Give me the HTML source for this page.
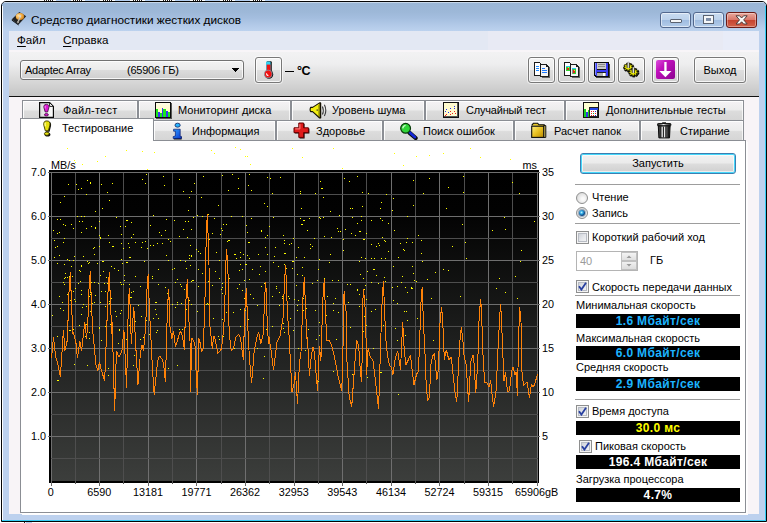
<!DOCTYPE html>
<html><head><meta charset="utf-8"><title>HD Tune</title>
<style>
html,body{margin:0;padding:0;font-family:"Liberation Sans",sans-serif;}
body{width:767px;height:523px;overflow:hidden;background:#fff;position:relative;font-family:"Liberation Sans",sans-serif;font-size:11px;color:#000;}
.abs{position:absolute;}
#win{position:absolute;left:1px;top:1px;width:764px;height:519px;border:1px solid #050505;border-radius:5px 5px 0 0;background:#bdd1ee;overflow:hidden;}
#tgrad{position:absolute;left:0;top:0;width:764px;height:29px;background:linear-gradient(#f4f8fc 0,#9ab6d6 1px,#9db8d8 10px,#a4bedf 16px,#b4cbe9 24px,#bcd2ee 29px);}
#edgeR{position:absolute;left:763px;top:4px;width:1px;height:515px;background:#35cdf5;}
#edgeB{position:absolute;left:0;top:518px;width:764px;height:1px;background:#35cdf5;}
#edgeL{position:absolute;left:0;top:4px;width:1px;height:514px;background:#fdfeff;}
#title{position:absolute;left:31px;top:11px;font-size:11.8px;line-height:18px;white-space:nowrap;}
.cb{position:absolute;top:12px;width:29px;height:14px;border:1px solid #52688e;border-radius:3px;background:linear-gradient(#c9dbf0 0,#bcd2ec 48%,#9fbce0 52%,#b4cdea 100%);box-shadow:inset 0 0 0 1px rgba(255,255,255,.55);}
#bclose{border-color:#6b1b16;background:linear-gradient(#e9a99d 0,#d9776a 48%,#c6432f 52%,#d2634b 100%);box-shadow:inset 0 0 0 1px rgba(255,255,255,.35);}
#menubar{position:absolute;left:9px;top:31px;width:750px;height:19px;background:linear-gradient(90deg,#e3e8f3 0,#e3e8f3 479px,#e8eaf4 479px,#e8eaf4 714px,#e8ecf8 714px);font-size:12px;}
#menubar span{position:absolute;top:2px;line-height:14px;font-size:11.6px;}
#menubar u{text-underline-offset:2px;text-decoration-thickness:1px;}
#toolbar{position:absolute;left:9px;top:50px;width:750px;height:46px;background:linear-gradient(#f8f5f8 0,#f8f5f8 2px,#f2f2f3 2px,#eeeeef 30%,#dbdbdb 62%,#c5c5c5 100%);}
#tbline{position:absolute;left:9px;top:96px;width:750px;height:1px;background:#111;}
#dlg{position:absolute;left:9px;top:97px;width:750px;height:417px;background:#f8f4f7;}
.btn{position:absolute;border:1px solid #787878;border-radius:3px;background:linear-gradient(#f4f4f4 0,#ececec 48%,#dedede 52%,#d2d2d2 100%);box-shadow:inset 0 0 0 1px rgba(255,255,255,.8),0 0 0 1px rgba(255,255,255,.55);box-sizing:border-box;}
#combo{position:absolute;left:20px;top:60px;width:224px;height:20px;box-sizing:border-box;border:1px solid #727272;border-radius:3px;background:linear-gradient(#f3f3f3 0,#ebebeb 48%,#dcdcdc 52%,#cfcfcf 100%);box-shadow:inset 0 0 0 1px rgba(255,255,255,.8);}
#combo span{position:absolute;top:3px;line-height:13px;white-space:nowrap;letter-spacing:-0.25px;}
.tab{position:absolute;box-sizing:border-box;border:1px solid #8b8e94;border-bottom:none;background:linear-gradient(#f5f3f5 0,#ececec 47%,#dcdcdc 53%,#d5d5d5 100%);box-shadow:inset 1px 1px 0 rgba(255,255,255,.9),inset -1px 0 0 rgba(255,255,255,.7);white-space:nowrap;}
.tab span{position:absolute;line-height:13px;margin-left:-1px;}
.tab svg{position:absolute;margin-left:-1px;}
#panel{position:absolute;left:20px;top:140px;width:726px;height:373px;box-sizing:border-box;border:1px solid #8b8e94;background:#fff;box-shadow:1px 1px 0 #fff,2px 2px 0 #fdfcfd;}
#tabact{position:absolute;left:20px;top:118px;width:134px;height:23px;box-sizing:border-box;border:1px solid #8b8e94;border-bottom:none;background:#fff;}
.sep{position:absolute;left:575px;width:165px;height:1px;background:#9d9d9d;}
.lbl{position:absolute;line-height:13px;white-space:nowrap;}
.bb{position:absolute;left:576px;width:164px;height:14px;background:#000;text-align:center;font-weight:bold;font-size:12px;line-height:14px;white-space:nowrap;letter-spacing:0.35px;}
.chk{position:absolute;width:13px;height:13px;box-sizing:border-box;border:1px solid #8e8f8f;background:linear-gradient(135deg,#c4c8d0,#e6e8ec 55%,#f8f8f8);box-shadow:inset 0 0 0 1px #f4f4f4,inset 0 0 0 2px #b8bcc4;}
.chk svg{position:absolute;left:1px;top:1px;}
.rad{position:absolute;width:12px;height:12px;box-sizing:border-box;border:1px solid #8e8f8f;border-radius:50%;background:radial-gradient(circle at 60% 60%,#fafafa 15%,#cfcfcf 100%);}
#chart{position:absolute;left:0;top:0;}

</style></head><body>
<svg id="toprow" class="abs" style="left:0;top:0" width="767" height="1" viewBox="0 0 767 1" shape-rendering="crispEdges"><rect x="44" y="0" width="1" height="1" fill="#222"/><rect x="46" y="0" width="1" height="1" fill="#222"/><rect x="48" y="0" width="1" height="1" fill="#222"/><rect x="50" y="0" width="1" height="1" fill="#222"/><rect x="52" y="0" width="1" height="1" fill="#222"/><rect x="56" y="0" width="15" height="1" fill="#b4cff0"/><rect x="73" y="0" width="1" height="1" fill="#222"/><rect x="75" y="0" width="1" height="1" fill="#222"/><rect x="77" y="0" width="1" height="1" fill="#222"/><rect x="79" y="0" width="1" height="1" fill="#222"/><rect x="81" y="0" width="1" height="1" fill="#222"/><rect x="85" y="0" width="15" height="1" fill="#b4cff0"/><rect x="103" y="0" width="1" height="1" fill="#222"/><rect x="105" y="0" width="1" height="1" fill="#222"/><rect x="107" y="0" width="1" height="1" fill="#222"/><rect x="109" y="0" width="1" height="1" fill="#222"/><rect x="111" y="0" width="1" height="1" fill="#222"/><rect x="115" y="0" width="15" height="1" fill="#b4cff0"/><rect x="133" y="0" width="1" height="1" fill="#222"/><rect x="135" y="0" width="1" height="1" fill="#222"/><rect x="137" y="0" width="1" height="1" fill="#222"/><rect x="139" y="0" width="1" height="1" fill="#222"/><rect x="141" y="0" width="1" height="1" fill="#222"/><rect x="145" y="0" width="15" height="1" fill="#b4cff0"/><rect x="163" y="0" width="1" height="1" fill="#222"/><rect x="165" y="0" width="1" height="1" fill="#222"/><rect x="167" y="0" width="1" height="1" fill="#222"/><rect x="169" y="0" width="1" height="1" fill="#222"/><rect x="171" y="0" width="1" height="1" fill="#222"/><rect x="175" y="0" width="15" height="1" fill="#b4cff0"/><rect x="193" y="0" width="1" height="1" fill="#222"/><rect x="195" y="0" width="1" height="1" fill="#222"/><rect x="197" y="0" width="1" height="1" fill="#222"/><rect x="199" y="0" width="1" height="1" fill="#222"/><rect x="201" y="0" width="1" height="1" fill="#222"/><rect x="205" y="0" width="15" height="1" fill="#b4cff0"/><rect x="223" y="0" width="1" height="1" fill="#222"/><rect x="225" y="0" width="1" height="1" fill="#222"/><rect x="227" y="0" width="1" height="1" fill="#222"/><rect x="229" y="0" width="1" height="1" fill="#222"/><rect x="231" y="0" width="1" height="1" fill="#222"/><rect x="235" y="0" width="15" height="1" fill="#b4cff0"/><rect x="253" y="0" width="1" height="1" fill="#222"/><rect x="255" y="0" width="1" height="1" fill="#222"/><rect x="257" y="0" width="1" height="1" fill="#222"/><rect x="259" y="0" width="1" height="1" fill="#222"/><rect x="261" y="0" width="1" height="1" fill="#222"/><rect x="265" y="0" width="15" height="1" fill="#b4cff0"/></svg>
<svg id="botrow" class="abs" style="left:0;top:522px" width="767" height="1" viewBox="0 0 767 1" shape-rendering="crispEdges"><rect x="24" y="0" width="1" height="1" fill="#222"/><rect x="26" y="0" width="6" height="1" fill="#b4cff0"/></svg>
<div id="win">
 <div id="tgrad"></div>
 <div id="edgeL"></div><div id="edgeR"></div><div id="edgeB"></div>
</div>
<!-- title icon -->
<svg class="abs" style="left:11px;top:9px" width="18" height="18" viewBox="0 0 18 18"><defs><radialGradient id="pl" cx="0.35" cy="0.4" r="0.75"><stop offset="0" stop-color="#ffe0a0"/><stop offset="0.55" stop-color="#f2aa40"/><stop offset="1" stop-color="#b86c10"/></radialGradient></defs>
 <path d="M0.8 10.3 L8.3 3 L15.2 7.2 L7.6 15.5 Z" fill="#222"/>
 <path d="M0.8 10.3 L7.6 15.5 L7.6 16.5 L0.8 11.4 Z" fill="#0c0c0c"/>
 <ellipse cx="9" cy="7.4" rx="4.2" ry="3.5" fill="url(#pl)"/>
 <rect x="8.2" y="6.2" width="1.8" height="2.4" rx="0.6" fill="#d8d8d8"/>
 <path d="M8.4 8.2 L6 13.4 L7.6 14 L9.4 8.6 Z" fill="#c4c0b8"/><path d="M6 12 h1.8 v1.8 h-1.8z" fill="#9a968e"/>
</svg>
<div id="title">Средство диагностики жестких дисков</div>
<div class="cb" style="left:660px"><div class="abs" style="left:9px;top:6px;width:10px;height:2px;background:#f4f6f8;border:1px solid #5a6270;border-radius:1px"></div></div>
<div class="cb" style="left:693px"><div class="abs" style="left:10px;top:3px;width:5px;height:3px;background:#7e8ea8;border:2px solid #f4f6f8;outline:1px solid #5a6270;"></div></div>
<div class="cb" id="bclose" style="left:726px"><svg class="abs" style="left:8px;top:1px" width="14" height="12" viewBox="0 0 14 12"><path d="M1 1.8 L4.6 1.8 L6.6 4 L8.6 1.8 L12.2 1.8 L8.7 5.9 L12.2 10 L8.6 10 L6.6 7.8 L4.6 10 L1 10 L4.5 5.9 Z" fill="#f8f8f8" stroke="#4e3c3a" stroke-width="1"/></svg></div>

<div id="menubar"><span style="left:8px"><u>Ф</u>айл</span><span style="left:54px"><u>С</u>правка</span></div>
<div id="toolbar"></div>
<div id="tbline"></div>
<div id="dlg"></div>

<div id="combo"><span style="left:4px">Adaptec Array</span><span style="left:106px">(65906 ГБ)</span>
 <svg class="abs" style="left:211px;top:7px" width="7" height="4" viewBox="0 0 7 4" shape-rendering="crispEdges"><path d="M0 0 H7 V1 H6 V2 H5 V3 H4 V4 H3 V3 H2 V2 H1 V1 H0Z" fill="#000"/></svg></div>
<div class="btn" style="left:255px;top:57px;width:27px;height:26px">
 <svg class="abs" style="left:7px;top:3px" width="12" height="18" viewBox="0 0 12 18"><circle cx="5.9" cy="13.4" r="4.3" fill="#111"/><rect x="3.6" y="0.3" width="5.2" height="12" rx="1" fill="#111"/><rect x="3" y="0.6" width="4.6" height="12" rx="1.2" fill="#30d0f0"/><rect x="3.7" y="3.6" width="3.8" height="9" fill="#f01010"/><circle cx="5.2" cy="13" r="3.9" fill="#f01010" stroke="#60d8f0" stroke-width="0.5"/><path d="M3.4 12.4 Q3.6 14.4 5.4 14.6" stroke="#fff" stroke-width="1.1" fill="none"/></svg></div>
<div class="abs" style="left:285px;top:71px;width:9px;height:1px;background:#000"></div><div class="lbl" style="left:297px;top:64px;font-weight:bold;font-size:12.5px;line-height:15px;letter-spacing:-0.4px">°C</div>

<div class="btn" style="left:528px;top:57px;width:27px;height:26px"></div>
<svg class="abs" style="left:533px;top:61px" width="18" height="18" viewBox="0 0 18 18" shape-rendering="crispEdges">
 <rect x="3" y="3" width="7" height="12" fill="#666"/>
 <path d="M1 1 H6 L8 3 V14 H1Z" fill="#fff" stroke="#1a1a1a" stroke-width="1" transform="translate(.5,.5)"/>
 <path d="M3 5.5h3M3 7.5h3M3 9.5h3" stroke="#1e8aff" stroke-width="1"/>
 <rect x="9" y="6" width="8" height="11" fill="#666"/>
 <path d="M7 3 H13 L15 5 V15 H7Z" fill="#f4f4f4" stroke="#1a1a1a" stroke-width="1" transform="translate(.5,.5)"/>
 <path d="M13 3.5 V5.5 H15" fill="none" stroke="#1a1a1a" transform="translate(.5,0)"/>
 <path d="M9 7.5h3M9 9.5h5M9 11.5h5" stroke="#1e7aff" stroke-width="1"/>
</svg>
<div class="btn" style="left:558px;top:57px;width:27px;height:26px"></div>
<svg class="abs" style="left:563px;top:61px" width="18" height="18" viewBox="0 0 18 18" shape-rendering="crispEdges">
 <rect x="3" y="3" width="7" height="12" fill="#666"/>
 <path d="M1 1 H6 L8 3 V14 H1Z" fill="#fff" stroke="#1a1a1a" stroke-width="1" transform="translate(.5,.5)"/>
 <rect x="3" y="5" width="4" height="1" fill="#28c8f0"/><rect x="3" y="6" width="4" height="4" fill="#30d030"/><rect x="4" y="7" width="2" height="2" fill="#e02818"/><rect x="5" y="6" width="1" height="1" fill="#f0e020"/>
 <rect x="9" y="6" width="8" height="11" fill="#666"/>
 <path d="M7 3 H13 L15 5 V15 H7Z" fill="#f4f4f4" stroke="#1a1a1a" stroke-width="1" transform="translate(.5,.5)"/>
 <path d="M13 3.5 V5.5 H15" fill="none" stroke="#1a1a1a" transform="translate(.5,0)"/>
 <rect x="9" y="7" width="4" height="1" fill="#28c8f0"/><rect x="9" y="8" width="4" height="5" fill="#30d030"/><rect x="10" y="9" width="2" height="3" fill="#e02818"/><rect x="11" y="9" width="1" height="1" fill="#f0e020"/><rect x="9" y="8" width="1" height="5" fill="#888"/>
</svg>
<div class="btn" style="left:588px;top:57px;width:27px;height:26px"></div>
<svg class="abs" style="left:594px;top:62px" width="17" height="17" viewBox="0 0 17 17" shape-rendering="crispEdges">
 <rect x="2" y="2" width="14" height="14" fill="#444"/>
 <path d="M0.5 0.5 H14.5 V14.5 H2 L0.5 13Z" fill="#3a3cf4" stroke="#0a0a0a" stroke-width="1"/>
 <rect x="1" y="1" width="1" height="12" fill="#8088ff"/>
 <rect x="3" y="1" width="9" height="6" fill="#c8c8c8"/><rect x="3" y="7" width="9" height="1" fill="#111"/>
 <path d="M4 2.5h7M4 4.5h7" stroke="#8a8a8a" stroke-width="1"/>
 <rect x="3" y="10" width="9" height="4" fill="#b0b0b0"/><rect x="3" y="10" width="9" height="1" fill="#222"/><rect x="9" y="11" width="2" height="3" fill="#fff"/>
</svg>
<div class="btn" style="left:618px;top:57px;width:27px;height:26px"></div>
<svg class="abs" style="left:622px;top:61px" width="18" height="18" viewBox="0 0 18 18">
 <path d="M9.60 6.00 L10.96 6.48 L10.72 7.32 L9.24 7.24 L8.83 7.74 L9.49 8.83 L8.65 9.34 L7.58 8.49 L6.87 8.66 L6.53 9.85 L5.48 9.80 L5.32 8.58 L4.65 8.34 L3.46 9.07 L2.70 8.48 L3.53 7.47 L3.20 6.93 L1.72 6.85 L1.60 6.00 L3.03 5.66 L3.20 5.07 L2.12 4.24 L2.70 3.52 L4.06 4.01 L4.65 3.66 L4.48 2.45 L5.48 2.20 L6.14 3.30 L6.87 3.34 L7.69 2.32 L8.65 2.66 L8.30 3.84 L8.83 4.26 L10.25 3.91 L10.72 4.68 L9.52 5.40Z" fill="#0a0a0a" stroke="#0a0a0a" stroke-width="1.6" transform="translate(0.5,0.6)"/>
 <path d="M9.60 6.00 L10.96 6.48 L10.72 7.32 L9.24 7.24 L8.83 7.74 L9.49 8.83 L8.65 9.34 L7.58 8.49 L6.87 8.66 L6.53 9.85 L5.48 9.80 L5.32 8.58 L4.65 8.34 L3.46 9.07 L2.70 8.48 L3.53 7.47 L3.20 6.93 L1.72 6.85 L1.60 6.00 L3.03 5.66 L3.20 5.07 L2.12 4.24 L2.70 3.52 L4.06 4.01 L4.65 3.66 L4.48 2.45 L5.48 2.20 L6.14 3.30 L6.87 3.34 L7.69 2.32 L8.65 2.66 L8.30 3.84 L8.83 4.26 L10.25 3.91 L10.72 4.68 L9.52 5.40Z" fill="#ecec08" stroke="#1a1a00" stroke-width="0.5"/>
 <path d="M14.70 11.10 L16.06 11.58 L15.82 12.42 L14.34 12.34 L13.93 12.84 L14.59 13.93 L13.75 14.44 L12.68 13.59 L11.97 13.76 L11.63 14.95 L10.58 14.90 L10.42 13.68 L9.75 13.44 L8.56 14.17 L7.80 13.58 L8.63 12.57 L8.30 12.03 L6.82 11.95 L6.70 11.10 L8.13 10.76 L8.30 10.17 L7.22 9.34 L7.80 8.62 L9.16 9.11 L9.75 8.76 L9.58 7.55 L10.58 7.30 L11.24 8.40 L11.97 8.44 L12.79 7.42 L13.75 7.76 L13.40 8.94 L13.93 9.36 L15.35 9.01 L15.82 9.78 L14.62 10.50Z" fill="#0a0a0a" stroke="#0a0a0a" stroke-width="1.6" transform="translate(0.5,0.6)"/>
 <path d="M14.70 11.10 L16.06 11.58 L15.82 12.42 L14.34 12.34 L13.93 12.84 L14.59 13.93 L13.75 14.44 L12.68 13.59 L11.97 13.76 L11.63 14.95 L10.58 14.90 L10.42 13.68 L9.75 13.44 L8.56 14.17 L7.80 13.58 L8.63 12.57 L8.30 12.03 L6.82 11.95 L6.70 11.10 L8.13 10.76 L8.30 10.17 L7.22 9.34 L7.80 8.62 L9.16 9.11 L9.75 8.76 L9.58 7.55 L10.58 7.30 L11.24 8.40 L11.97 8.44 L12.79 7.42 L13.75 7.76 L13.40 8.94 L13.93 9.36 L15.35 9.01 L15.82 9.78 L14.62 10.50Z" fill="#ecec08" stroke="#1a1a00" stroke-width="0.5"/>
 <path d="M5.2 1.6 L6.2 0.6 L7.2 1.6 V7 H5.2Z" fill="#8a8a8a"/><rect x="5.9" y="1.4" width="0.8" height="5.4" fill="#f0f0f0"/><rect x="7.1" y="1.8" width="0.7" height="5.4" fill="#1a1a1a"/><rect x="4.6" y="1.8" width="0.7" height="5" fill="#2a2a2a"/>
 <path d="M10.3 6.7 L11.3 5.7 L12.3 6.7 V12.1 H10.3Z" fill="#8a8a8a"/><rect x="11" y="6.5" width="0.8" height="5.4" fill="#f0f0f0"/><rect x="12.2" y="6.9" width="0.7" height="5.4" fill="#1a1a1a"/><rect x="9.7" y="6.9" width="0.7" height="5" fill="#2a2a2a"/>
</svg>
<div class="btn" style="left:652px;top:57px;width:27px;height:26px"></div>
<svg class="abs" style="left:656px;top:60px" width="20" height="20" viewBox="0 0 20 20">
 <defs><linearGradient id="pu" x1="0" y1="0" x2="1" y2="1"><stop offset="0" stop-color="#dc50dc"/><stop offset="0.35" stop-color="#c010bc"/><stop offset="1" stop-color="#8c0490"/></linearGradient></defs>
 <rect x="0" y="0" width="19" height="19" rx="2" fill="url(#pu)"/>
 <path d="M8.3 2 H10.6 V11 H15.5 L9.4 17.2 L3.3 11 H8.3Z" fill="#fff"/>
</svg>
<div class="btn" style="left:694px;top:57px;width:52px;height:26px;text-align:center;line-height:24px">Выход</div>

<!-- tabs row1 -->
<div class="tab" style="left:22px;top:100px;width:116px;height:20px"><span style="left:41px;top:3px;letter-spacing:0.25px">Файл-тест</span>
 <svg style="left:17px;top:1px" width="16" height="17" viewBox="0 0 16 17"><defs><linearGradient id="dg" x1="0" y1="0" x2="1" y2="0"><stop offset="0" stop-color="#dcdcdc"/><stop offset="1" stop-color="#fff"/></linearGradient></defs><path d="M0.6 0.6 H10.6 L14.4 4.4 V15.4 H0.6Z" fill="url(#dg)" stroke="#0a0a0a" stroke-width="1.2"/><path d="M10.6 0.6 V4.4 H14.4Z" fill="#fff" stroke="#0a0a0a" stroke-width="0.9"/><path d="M7.4 2.4 C4.9 2.4 4.6 4 4.9 5.6 L6.2 10 H8.6 L9.9 5.6 C10.2 4 9.9 2.4 7.4 2.4Z" fill="#dc18d4" stroke="#3a0838" stroke-width="0.8"/><ellipse cx="7.4" cy="12.8" rx="2" ry="1.2" fill="#dc18d4" stroke="#3a0838" stroke-width="0.8"/><path d="M6.3 4 C6.1 4.8 6.2 5.6 6.4 6.4" stroke="#f8b0f4" stroke-width="0.8" fill="none"/></svg></div>
<div class="tab" style="left:138px;top:100px;width:153px;height:20px"><span style="left:40px;top:3px">Мониторинг диска</span>
 <svg style="left:17px;top:1px" width="17" height="17" viewBox="0 0 17 17" shape-rendering="crispEdges"><defs><linearGradient id="yg" x1="0" y1="0" x2="0" y2="1"><stop offset="0" stop-color="#fffde8"/><stop offset="1" stop-color="#fffaa0"/></linearGradient></defs><rect x="1" y="1" width="16" height="16" fill="#555"/><rect width="16" height="16" fill="#0a0a0a"/><rect x="1" y="1" width="14" height="14" fill="url(#yg)"/><rect x="1" y="7" width="2" height="8" fill="#1ce81c"/><rect x="3" y="10" width="2" height="5" fill="#3838f0"/><rect x="5" y="11" width="2" height="4" fill="#1ce81c"/><rect x="7" y="6" width="1" height="9" fill="#3838f0"/><rect x="8" y="7" width="3" height="8" fill="#1ce81c"/><rect x="11" y="9" width="2" height="6" fill="#3838f0"/><rect x="13" y="10" width="2" height="5" fill="#1ce81c"/></svg></div>
<div class="tab" style="left:291px;top:100px;width:134px;height:20px"><span style="left:41px;top:3px">Уровень шума</span>
 <svg style="left:18px;top:1px" width="18" height="17" viewBox="0 0 18 17"><path d="M1.6 5.4 Q0.6 7.6 1.6 9.6 H3.6 L10.6 16 H11.6 V0.9 H10.6 L3.6 5.4Z" fill="#f2ee10" stroke="#141000" stroke-width="1.1" stroke-linejoin="round"/><path d="M11.3 1 V16" stroke="#141000" stroke-width="1.6"/><path d="M9.6 3 V14" stroke="#b0a800" stroke-width="1"/><rect x="7.6" y="7.4" width="1.2" height="1.4" fill="#333"/><path d="M13.4 4.4 Q15.3 8.4 13.4 12.4" fill="none" stroke="#3a3a3a" stroke-width="1.1"/><path d="M15.4 2.8 Q18.2 8.4 15.4 14" fill="none" stroke="#3a3a3a" stroke-width="1.1"/></svg></div>
<div class="tab" style="left:425px;top:100px;width:140px;height:20px"><span style="left:41px;top:3px;letter-spacing:-0.2px">Случайный тест</span>
 <svg style="left:18px;top:1px" width="16" height="16" viewBox="0 0 16 16" shape-rendering="crispEdges"><rect x="0" y="0" width="16" height="16" fill="#111"/><rect x="1" y="1" width="14" height="14" fill="#fffbcf"/><rect x="1" y="14" width="14" height="1" fill="#555"/><rect x="14" y="1" width="1" height="14" fill="#555"/><g fill="#2030f0"><rect x="11" y="4" width="1" height="1"/><rect x="7" y="6" width="1" height="1"/><rect x="3" y="7" width="1" height="1"/><rect x="11" y="6" width="1" height="1"/><rect x="2" y="9" width="1" height="1"/><rect x="5" y="10" width="1" height="1"/></g><g fill="#f02020"><rect x="11" y="9" width="1" height="1"/><rect x="7" y="9" width="1" height="1"/><rect x="3" y="12" width="1" height="1"/><rect x="7" y="12" width="1" height="1"/><rect x="9" y="11" width="1" height="1"/><rect x="12" y="11" width="1" height="1"/><rect x="2" y="13" width="1" height="1"/></g></svg></div>
<div class="tab" style="left:565px;top:100px;width:179px;height:20px"><span style="left:41px;top:3px">Дополнительные тесты</span>
 <svg style="left:18px;top:1px" width="16" height="16" viewBox="0 0 16 16" shape-rendering="crispEdges"><rect width="16" height="16" fill="#111"/><rect x="1" y="1" width="14" height="14" fill="#ffffd2"/><rect x="1" y="7" width="2" height="8" fill="#18d020"/><rect x="3" y="10" width="2" height="5" fill="#3038e8"/><rect x="5" y="8" width="1" height="7" fill="#18d020"/><rect x="6" y="5" width="9" height="10" fill="#222"/><rect x="7" y="6" width="8" height="2" fill="#2448e8"/><rect x="7" y="8" width="7" height="6" fill="#fff"/><rect x="8" y="9" width="1" height="1" fill="#e02020"/><rect x="10" y="9" width="1" height="1" fill="#e02020"/><rect x="12" y="9" width="1" height="1" fill="#2030e0"/><rect x="8" y="11" width="1" height="1" fill="#e02020"/><rect x="10" y="11" width="1" height="1" fill="#20b020"/><rect x="12" y="11" width="1" height="1" fill="#e02020"/><rect x="8" y="13" width="1" height="1" fill="#e02020"/><rect x="10" y="13" width="1" height="1" fill="#e02020"/><rect x="12" y="13" width="1" height="1" fill="#2030e0"/></svg></div>
<!-- tabs row2 -->
<div class="tab" style="left:153px;top:120px;width:123px;height:21px"><span style="left:39px;top:4px">Информация</span>
 <svg style="left:18.5px;top:1px" width="12" height="18" viewBox="0 0 12 18"><defs><linearGradient id="ib" x1="0" y1="0" x2="1" y2="1"><stop offset="0" stop-color="#30a0ff"/><stop offset="1" stop-color="#0c38d0"/></linearGradient></defs><path d="M1.8 16 L3 14.8 H9.6 V17.4 H1.8Z" fill="#0a0a0a"/><ellipse cx="5.6" cy="3.2" rx="2.6" ry="2" fill="#28b4ff" stroke="#0a2060" stroke-width="0.8"/><path d="M1.6 7.2 H8.2 V14.4 H9.4 V16.4 H1.2 V14.6 L3.4 14 V9.2 H1.6Z" fill="url(#ib)" stroke="#0a1c70" stroke-width="0.7"/></svg></div>
<div class="tab" style="left:276px;top:120px;width:107px;height:21px"><span style="left:40px;top:4px">Здоровье</span>
 <svg style="left:17px;top:1px" width="17" height="17" viewBox="0 0 17 17"><path d="M6.6 1.8 H11.6 V6.6 H16.4 V11.6 H11.6 V16.4 H6.6 V11.6 H1.8 V6.6 H6.6Z" fill="#1a0000"/><path d="M5.8 1 H10.6 V5.8 H15.4 V10.6 H10.6 V15.4 H5.8 V10.6 H1 V5.8 H5.8Z" fill="#e01c1c" stroke="#6a0000" stroke-width="1"/><path d="M6.9 2.2 V6.9 H2.2" stroke="#ff8a8a" stroke-width="1" fill="none"/></svg></div>
<div class="tab" style="left:383px;top:120px;width:131px;height:21px"><span style="left:40px;top:4px">Поиск ошибок</span>
 <svg style="left:16px;top:1px" width="19" height="18" viewBox="0 0 19 18"><path d="M10.6 10.8 L16.6 16" stroke="#0a0a0a" stroke-width="4.2" stroke-linecap="round"/><path d="M9.6 9.6 L16 15.2" stroke="#1428d8" stroke-width="2.6" stroke-linecap="round"/><circle cx="6.6" cy="6.3" r="4.9" fill="#30d438" stroke="#083808" stroke-width="1.2"/><path d="M3.8 6.4 Q4 3.8 6.6 3.4" stroke="#c8fcc8" stroke-width="1.3" fill="none"/></svg></div>
<div class="tab" style="left:514px;top:120px;width:126px;height:21px"><span style="left:40px;top:4px">Расчет папок</span>
 <svg style="left:17px;top:1px" width="16" height="17" viewBox="0 0 16 17"><defs><linearGradient id="fo" x1="0" y1="0" x2="1" y2="1"><stop offset="0" stop-color="#fff080"/><stop offset="0.5" stop-color="#e8c020"/><stop offset="1" stop-color="#b88800"/></linearGradient></defs><path d="M0.7 3.4 L2.4 1.2 H6.6 L8 2.8 H13.2 V4.6" fill="#e8c828" stroke="#0a0a0a" stroke-width="1.1"/><rect x="0.7" y="4.2" width="12.2" height="11.2" fill="url(#fo)" stroke="#0a0a0a" stroke-width="1.1"/><path d="M12.9 3.6 H14.8 V15.4 H12.9Z" fill="#f4e070" stroke="#0a0a0a" stroke-width="1"/></svg></div>
<div class="tab" style="left:640px;top:120px;width:104px;height:21px"><span style="left:40px;top:4px">Стирание</span>
 <svg style="left:17px;top:1px" width="15" height="17" viewBox="0 0 15 17"><defs><linearGradient id="tr" x1="0" y1="0" x2="1" y2="0"><stop offset="0" stop-color="#1a1a1a"/><stop offset="0.3" stop-color="#8a8a8a"/><stop offset="0.45" stop-color="#e8e8e8"/><stop offset="0.65" stop-color="#7a7a7a"/><stop offset="1" stop-color="#161616"/></linearGradient></defs><rect x="5.2" y="0.2" width="3.8" height="1.6" fill="#2a2a2a"/><rect x="0.5" y="1.5" width="13.4" height="2.4" rx="0.8" fill="url(#tr)" stroke="#0a0a0a" stroke-width="0.9"/><path d="M1.3 4 H13.1 L12.5 15.9 H1.9Z" fill="url(#tr)" stroke="#0a0a0a" stroke-width="1"/><path d="M3.9 4.6 V15.4 M6.4 4.6 V15.4 M8.9 4.6 V15.4 M11.2 4.6 V15.4" stroke="#111" stroke-width="1"/><path d="M5.1 4.8 V15.2 M7.6 4.8 V15.2" stroke="#f4f4f4" stroke-width="0.9"/></svg></div>

<div id="panel"></div>
<div id="tabact"><span class="lbl" style="left:41px;top:3px">Тестирование</span>
 <svg class="abs" style="left:19px;top:1px" width="13" height="18" viewBox="0 0 13 18"><path d="M7.6 1.6 C4.6 1.6 4.2 3.6 4.6 6 L6 11.8 H9.6 L11 6 C11.4 3.6 10.6 1.6 7.6 1.6Z" fill="#111"/><ellipse cx="7.5" cy="14.6" rx="2.9" ry="2" fill="#111"/><path d="M6.8 0.9 C4 0.9 3.4 2.8 3.8 5.2 L5.3 10.8 H8.4 L9.9 5.2 C10.3 2.8 9.6 0.9 6.8 0.9Z" fill="#e6e010" stroke="#3a3800" stroke-width="0.9"/><path d="M5.3 2.6 C4.9 3.6 5 5 5.4 6.4" stroke="#fffeb0" stroke-width="1.1" fill="none"/><ellipse cx="6.8" cy="13.7" rx="2.4" ry="1.6" fill="#e6e010" stroke="#3a3800" stroke-width="0.9"/></svg></div>



<!-- right panel -->
<div class="abs" style="left:580px;top:153px;width:156px;height:21px;box-sizing:border-box;border:1px solid #3c7fb1;border-radius:3px;background:linear-gradient(#f2f2f2 0,#ebebeb 48%,#dddddd 52%,#cfcfcf 100%);box-shadow:inset 0 0 0 1px #46d8fb, inset 0 0 0 2px rgba(255,255,255,.6);text-align:center;line-height:19px">Запустить</div>
<div class="sep" style="top:184px"></div>
<div class="rad" style="left:576px;top:192px"></div><div class="lbl" style="left:592px;top:191px">Чтение</div>
<div class="rad" style="left:576px;top:207px"><div class="abs" style="left:2px;top:2px;width:6px;height:6px;border-radius:50%;box-shadow:0 0 0 1px rgba(12,60,110,.35);background:radial-gradient(circle at 42% 40%,#c8f4ff 0,#38b0e8 28%,#0c4a88 62%,#082c58 100%)"></div></div><div class="lbl" style="left:592px;top:207px">Запись</div>
<div class="sep" style="top:223px"></div>
<div class="chk" style="left:576px;top:231px"></div><div class="lbl" style="left:592px;top:231px">Короткий рабочий ход</div>
<div class="abs" style="left:576px;top:251px;width:62px;height:20px;box-sizing:border-box;border:1px solid #b4b4b4;background:#fff"><span class="lbl" style="left:3px;top:3px;color:#9a9a9a">40</span>
 <div class="abs" style="left:44px;top:0px;width:16px;height:9px;background:linear-gradient(#f4f4f4,#e0e0e0);border:1px solid #c0c0c0;box-sizing:border-box"></div>
 <div class="abs" style="left:44px;top:9px;width:16px;height:9px;background:linear-gradient(#f0f0f0,#dcdcdc);border:1px solid #c0c0c0;box-sizing:border-box"></div>
 <svg class="abs" style="left:49px;top:3px" width="6" height="12" viewBox="0 0 6 12"><path d="M0.5 3 L3 0.5 L5.5 3Z M0.5 9 L3 11.5 L5.5 9Z" fill="#9a9a9a"/></svg></div>
<div class="lbl" style="left:650px;top:254px">ГБ</div>
<div class="chk" style="left:576px;top:280px"><svg width="9" height="9" viewBox="0 0 9 9"><path d="M1 4.2 L3.4 7.6 L8 0.8" fill="none" stroke="#2840a0" stroke-width="1.8"/></svg></div><div class="lbl" style="left:592px;top:281px">Скорость передачи данных</div>
<div class="sep" style="top:295px"></div>
<div class="lbl" style="left:576px;top:299px">Минимальная скорость</div>
<div class="bb" style="top:314px;color:#1cb4ff">1.6 Мбайт/сек</div>
<div class="lbl" style="left:576px;top:332px">Максимальная скорость</div>
<div class="bb" style="top:346px;color:#1cb4ff">6.0 Мбайт/сек</div>
<div class="lbl" style="left:576px;top:361px">Средняя скорость</div>
<div class="bb" style="top:377px;color:#1cb4ff">2.9 Мбайт/сек</div>
<div class="sep" style="top:399px"></div>
<div class="chk" style="left:576px;top:405px"><svg width="9" height="9" viewBox="0 0 9 9"><path d="M1 4.2 L3.4 7.6 L8 0.8" fill="none" stroke="#2840a0" stroke-width="1.8"/></svg></div><div class="lbl" style="left:592px;top:405px">Время доступа</div>
<div class="bb" style="top:421px;color:#ffff00">30.0 мс</div>
<div class="chk" style="left:579px;top:440px"><svg width="9" height="9" viewBox="0 0 9 9"><path d="M1 4.2 L3.4 7.6 L8 0.8" fill="none" stroke="#2840a0" stroke-width="1.8"/></svg></div><div class="lbl" style="left:595px;top:440px">Пиковая скорость</div>
<div class="bb" style="top:455px;color:#fff">196.4 Мбайт/сек</div>
<div class="lbl" style="left:576px;top:473px">Загрузка процессора</div>
<div class="bb" style="top:488px;color:#fff">4.7%</div>

<svg id="chart" width="767" height="523" viewBox="0 0 767 523">
<defs><linearGradient id="pg" x1="0" y1="0" x2="0" y2="1"><stop offset="0" stop-color="#000"/><stop offset="0.12" stop-color="#020202"/><stop offset="1" stop-color="#3c3e3c"/></linearGradient></defs>
<g shape-rendering="crispEdges">
<rect x="49" y="170" width="490" height="313" fill="#000"/>
<rect x="51" y="172" width="487" height="309" fill="url(#pg)"/>
<rect x="51" y="172" width="1" height="309" fill="#6f6f6f"/>
<rect x="51" y="481" width="1" height="5" fill="#6a6a6a"/>
<rect x="75" y="172" width="1" height="309" fill="#4e4e4e"/>
<rect x="75" y="481" width="1" height="3" fill="#565656"/>
<rect x="99" y="172" width="1" height="309" fill="#6f6f6f"/>
<rect x="99" y="481" width="1" height="5" fill="#6a6a6a"/>
<rect x="123" y="172" width="1" height="309" fill="#4e4e4e"/>
<rect x="123" y="481" width="1" height="3" fill="#565656"/>
<rect x="148" y="172" width="1" height="309" fill="#6f6f6f"/>
<rect x="148" y="481" width="1" height="5" fill="#6a6a6a"/>
<rect x="172" y="172" width="1" height="309" fill="#4e4e4e"/>
<rect x="172" y="481" width="1" height="3" fill="#565656"/>
<rect x="196" y="172" width="1" height="309" fill="#6f6f6f"/>
<rect x="196" y="481" width="1" height="5" fill="#6a6a6a"/>
<rect x="221" y="172" width="1" height="309" fill="#4e4e4e"/>
<rect x="221" y="481" width="1" height="3" fill="#565656"/>
<rect x="245" y="172" width="1" height="309" fill="#6f6f6f"/>
<rect x="245" y="481" width="1" height="5" fill="#6a6a6a"/>
<rect x="269" y="172" width="1" height="309" fill="#4e4e4e"/>
<rect x="269" y="481" width="1" height="3" fill="#565656"/>
<rect x="294" y="172" width="1" height="309" fill="#6f6f6f"/>
<rect x="294" y="481" width="1" height="5" fill="#6a6a6a"/>
<rect x="318" y="172" width="1" height="309" fill="#4e4e4e"/>
<rect x="318" y="481" width="1" height="3" fill="#565656"/>
<rect x="342" y="172" width="1" height="309" fill="#6f6f6f"/>
<rect x="342" y="481" width="1" height="5" fill="#6a6a6a"/>
<rect x="366" y="172" width="1" height="309" fill="#4e4e4e"/>
<rect x="366" y="481" width="1" height="3" fill="#565656"/>
<rect x="391" y="172" width="1" height="309" fill="#6f6f6f"/>
<rect x="391" y="481" width="1" height="5" fill="#6a6a6a"/>
<rect x="415" y="172" width="1" height="309" fill="#4e4e4e"/>
<rect x="415" y="481" width="1" height="3" fill="#565656"/>
<rect x="439" y="172" width="1" height="309" fill="#6f6f6f"/>
<rect x="439" y="481" width="1" height="5" fill="#6a6a6a"/>
<rect x="464" y="172" width="1" height="309" fill="#4e4e4e"/>
<rect x="464" y="481" width="1" height="3" fill="#565656"/>
<rect x="488" y="172" width="1" height="309" fill="#6f6f6f"/>
<rect x="488" y="481" width="1" height="5" fill="#6a6a6a"/>
<rect x="512" y="172" width="1" height="309" fill="#4e4e4e"/>
<rect x="512" y="481" width="1" height="3" fill="#565656"/>
<rect x="537" y="172" width="1" height="309" fill="#6f6f6f"/>
<rect x="537" y="481" width="1" height="5" fill="#6a6a6a"/>
<rect x="48" y="172" width="492" height="1" fill="#6f6f6f"/>
<rect x="51" y="194" width="487" height="1" fill="#4e4e4e"/>
<rect x="48" y="216" width="492" height="1" fill="#6f6f6f"/>
<rect x="51" y="238" width="487" height="1" fill="#4e4e4e"/>
<rect x="48" y="260" width="492" height="1" fill="#6f6f6f"/>
<rect x="51" y="282" width="487" height="1" fill="#4e4e4e"/>
<rect x="48" y="304" width="492" height="1" fill="#6f6f6f"/>
<rect x="51" y="326" width="487" height="1" fill="#4e4e4e"/>
<rect x="48" y="348" width="492" height="1" fill="#6f6f6f"/>
<rect x="51" y="370" width="487" height="1" fill="#4e4e4e"/>
<rect x="48" y="392" width="492" height="1" fill="#6f6f6f"/>
<rect x="51" y="414" width="487" height="1" fill="#4e4e4e"/>
<rect x="48" y="436" width="492" height="1" fill="#6f6f6f"/>
<rect x="51" y="458" width="487" height="1" fill="#4e4e4e"/>
<g fill="#ffff00"><rect x="290" y="318" width="1" height="1"/><rect x="314" y="238" width="1" height="1"/><rect x="207" y="303" width="1" height="1"/><rect x="283" y="235" width="1" height="1"/><rect x="82" y="307" width="1" height="1"/><rect x="219" y="339" width="1" height="1"/><rect x="202" y="273" width="1" height="1"/><rect x="414" y="280" width="1" height="1"/><rect x="87" y="180" width="1" height="1"/><rect x="249" y="174" width="1" height="1"/><rect x="292" y="268" width="1" height="1"/><rect x="374" y="258" width="1" height="1"/><rect x="222" y="230" width="1" height="1"/><rect x="413" y="205" width="1" height="1"/><rect x="338" y="231" width="1" height="1"/><rect x="248" y="242" width="2" height="1"/><rect x="505" y="292" width="1" height="1"/><rect x="103" y="271" width="1" height="1"/><rect x="89" y="296" width="1" height="1"/><rect x="359" y="231" width="1" height="1"/><rect x="121" y="234" width="1" height="1"/><rect x="168" y="239" width="1" height="1"/><rect x="152" y="276" width="1" height="1"/><rect x="267" y="206" width="1" height="1"/><rect x="174" y="268" width="1" height="1"/><rect x="357" y="223" width="1" height="1"/><rect x="297" y="310" width="1" height="1"/><rect x="435" y="272" width="1" height="1"/><rect x="75" y="288" width="1" height="1"/><rect x="99" y="327" width="1" height="1"/><rect x="69" y="260" width="1" height="1"/><rect x="69" y="276" width="1" height="1"/><rect x="211" y="345" width="1" height="1"/><rect x="226" y="224" width="1" height="1"/><rect x="67" y="294" width="1" height="1"/><rect x="246" y="225" width="1" height="1"/><rect x="221" y="289" width="1" height="1"/><rect x="94" y="254" width="1" height="1"/><rect x="298" y="348" width="1" height="1"/><rect x="300" y="193" width="1" height="1"/><rect x="365" y="258" width="1" height="1"/><rect x="278" y="266" width="1" height="1"/><rect x="153" y="318" width="1" height="1"/><rect x="248" y="319" width="1" height="1"/><rect x="306" y="308" width="1" height="1"/><rect x="109" y="242" width="1" height="1"/><rect x="247" y="255" width="1" height="1"/><rect x="283" y="323" width="1" height="1"/><rect x="73" y="260" width="1" height="1"/><rect x="380" y="218" width="1" height="1"/><rect x="188" y="221" width="1" height="1"/><rect x="111" y="298" width="1" height="1"/><rect x="402" y="322" width="1" height="1"/><rect x="57" y="219" width="1" height="1"/><rect x="191" y="281" width="1" height="1"/><rect x="421" y="240" width="1" height="1"/><rect x="517" y="298" width="1" height="1"/><rect x="227" y="241" width="1" height="1"/><rect x="115" y="311" width="1" height="1"/><rect x="60" y="202" width="1" height="1"/><rect x="163" y="176" width="1" height="1"/><rect x="223" y="336" width="1" height="1"/><rect x="404" y="311" width="1" height="1"/><rect x="276" y="286" width="1" height="1"/><rect x="319" y="322" width="1" height="1"/><rect x="158" y="284" width="1" height="1"/><rect x="345" y="229" width="1" height="1"/><rect x="361" y="220" width="1" height="1"/><rect x="257" y="348" width="1" height="1"/><rect x="405" y="335" width="1" height="1"/><rect x="189" y="258" width="1" height="1"/><rect x="214" y="218" width="1" height="1"/><rect x="118" y="343" width="1" height="1"/><rect x="168" y="260" width="1" height="1"/><rect x="307" y="230" width="1" height="1"/><rect x="371" y="282" width="1" height="1"/><rect x="63" y="282" width="1" height="1"/><rect x="327" y="296" width="1" height="1"/><rect x="121" y="259" width="1" height="1"/><rect x="213" y="318" width="1" height="1"/><rect x="120" y="226" width="1" height="1"/><rect x="101" y="340" width="1" height="1"/><rect x="116" y="217" width="1" height="1"/><rect x="236" y="258" width="1" height="1"/><rect x="463" y="176" width="1" height="1"/><rect x="366" y="233" width="1" height="1"/><rect x="110" y="324" width="1" height="1"/><rect x="100" y="302" width="1" height="1"/><rect x="443" y="269" width="1" height="1"/><rect x="272" y="296" width="1" height="1"/><rect x="260" y="266" width="1" height="1"/><rect x="361" y="216" width="1" height="1"/><rect x="95" y="295" width="1" height="1"/><rect x="310" y="248" width="1" height="1"/><rect x="111" y="266" width="1" height="1"/><rect x="407" y="238" width="1" height="1"/><rect x="421" y="253" width="1" height="1"/><rect x="57" y="380" width="2" height="1"/><rect x="393" y="266" width="1" height="1"/><rect x="324" y="278" width="1" height="1"/><rect x="411" y="288" width="2" height="1"/><rect x="367" y="271" width="1" height="1"/><rect x="77" y="216" width="1" height="1"/><rect x="180" y="284" width="1" height="1"/><rect x="318" y="381" width="1" height="1"/><rect x="382" y="220" width="1" height="1"/><rect x="267" y="254" width="1" height="1"/><rect x="198" y="251" width="1" height="1"/><rect x="59" y="296" width="1" height="1"/><rect x="79" y="221" width="1" height="1"/><rect x="89" y="276" width="1" height="1"/><rect x="319" y="335" width="1" height="1"/><rect x="413" y="273" width="1" height="1"/><rect x="492" y="230" width="1" height="1"/><rect x="123" y="248" width="1" height="1"/><rect x="401" y="282" width="1" height="1"/><rect x="427" y="279" width="1" height="1"/><rect x="191" y="304" width="1" height="1"/><rect x="376" y="246" width="1" height="1"/><rect x="373" y="269" width="2" height="1"/><rect x="71" y="224" width="1" height="1"/><rect x="333" y="371" width="1" height="1"/><rect x="159" y="232" width="1" height="1"/><rect x="90" y="294" width="1" height="1"/><rect x="240" y="326" width="1" height="1"/><rect x="386" y="194" width="1" height="1"/><rect x="94" y="302" width="1" height="1"/><rect x="90" y="311" width="1" height="1"/><rect x="407" y="320" width="1" height="1"/><rect x="423" y="326" width="1" height="1"/><rect x="208" y="281" width="1" height="1"/><rect x="64" y="264" width="1" height="1"/><rect x="131" y="237" width="1" height="1"/><rect x="165" y="287" width="1" height="1"/><rect x="63" y="310" width="1" height="1"/><rect x="95" y="228" width="1" height="1"/><rect x="95" y="227" width="1" height="1"/><rect x="384" y="277" width="1" height="1"/><rect x="319" y="259" width="1" height="1"/><rect x="222" y="283" width="1" height="1"/><rect x="89" y="332" width="1" height="1"/><rect x="393" y="198" width="1" height="1"/><rect x="320" y="181" width="1" height="1"/><rect x="177" y="365" width="1" height="1"/><rect x="216" y="252" width="1" height="1"/><rect x="505" y="229" width="1" height="1"/><rect x="131" y="222" width="1" height="1"/><rect x="60" y="308" width="1" height="1"/><rect x="153" y="245" width="1" height="1"/><rect x="293" y="238" width="1" height="1"/><rect x="258" y="254" width="1" height="1"/><rect x="99" y="221" width="1" height="1"/><rect x="120" y="282" width="1" height="1"/><rect x="81" y="216" width="1" height="1"/><rect x="267" y="235" width="1" height="1"/><rect x="126" y="339" width="1" height="1"/><rect x="188" y="210" width="1" height="1"/><rect x="52" y="315" width="1" height="1"/><rect x="94" y="282" width="1" height="1"/><rect x="352" y="217" width="1" height="1"/><rect x="265" y="271" width="1" height="1"/><rect x="330" y="254" width="1" height="1"/><rect x="259" y="274" width="1" height="1"/><rect x="86" y="228" width="1" height="1"/><rect x="398" y="394" width="1" height="1"/><rect x="279" y="305" width="1" height="1"/><rect x="202" y="216" width="1" height="1"/><rect x="129" y="284" width="1" height="1"/><rect x="183" y="229" width="1" height="1"/><rect x="221" y="228" width="1" height="1"/><rect x="100" y="237" width="1" height="1"/><rect x="257" y="305" width="1" height="1"/><rect x="168" y="368" width="1" height="1"/><rect x="89" y="338" width="1" height="1"/><rect x="157" y="330" width="1" height="1"/><rect x="59" y="255" width="1" height="1"/><rect x="363" y="239" width="1" height="1"/><rect x="385" y="241" width="1" height="1"/><rect x="104" y="283" width="1" height="1"/><rect x="332" y="280" width="1" height="1"/><rect x="417" y="318" width="1" height="1"/><rect x="65" y="225" width="1" height="1"/><rect x="296" y="257" width="1" height="1"/><rect x="121" y="284" width="1" height="1"/><rect x="359" y="306" width="1" height="1"/><rect x="357" y="176" width="1" height="1"/><rect x="122" y="263" width="1" height="1"/><rect x="60" y="219" width="1" height="1"/><rect x="249" y="258" width="1" height="1"/><rect x="186" y="309" width="1" height="1"/><rect x="71" y="266" width="1" height="1"/><rect x="359" y="294" width="1" height="1"/><rect x="405" y="287" width="1" height="1"/><rect x="320" y="218" width="1" height="1"/><rect x="79" y="270" width="1" height="1"/><rect x="357" y="290" width="1" height="1"/><rect x="177" y="279" width="1" height="1"/><rect x="78" y="189" width="1" height="1"/><rect x="388" y="223" width="1" height="1"/><rect x="392" y="287" width="1" height="1"/><rect x="165" y="230" width="1" height="1"/><rect x="102" y="208" width="1" height="1"/><rect x="284" y="253" width="2" height="1"/><rect x="140" y="339" width="1" height="1"/><rect x="234" y="254" width="2" height="1"/><rect x="218" y="336" width="1" height="1"/><rect x="155" y="309" width="1" height="1"/><rect x="140" y="286" width="1" height="1"/><rect x="375" y="309" width="1" height="1"/><rect x="208" y="250" width="1" height="1"/><rect x="223" y="334" width="1" height="1"/><rect x="138" y="305" width="1" height="1"/><rect x="189" y="300" width="1" height="1"/><rect x="191" y="229" width="1" height="1"/><rect x="393" y="300" width="1" height="1"/><rect x="91" y="282" width="1" height="1"/><rect x="55" y="247" width="1" height="1"/><rect x="343" y="239" width="1" height="1"/><rect x="194" y="183" width="1" height="1"/><rect x="69" y="330" width="2" height="1"/><rect x="144" y="261" width="1" height="1"/><rect x="316" y="339" width="1" height="1"/><rect x="324" y="236" width="1" height="1"/><rect x="275" y="247" width="1" height="1"/><rect x="184" y="289" width="1" height="1"/><rect x="185" y="221" width="1" height="1"/><rect x="218" y="205" width="1" height="1"/><rect x="309" y="218" width="1" height="1"/><rect x="371" y="220" width="1" height="1"/><rect x="97" y="263" width="1" height="1"/><rect x="133" y="291" width="1" height="1"/><rect x="83" y="304" width="1" height="1"/><rect x="73" y="291" width="1" height="1"/><rect x="126" y="220" width="2" height="1"/><rect x="124" y="275" width="1" height="1"/><rect x="365" y="285" width="1" height="1"/><rect x="266" y="329" width="1" height="1"/><rect x="364" y="289" width="1" height="1"/><rect x="81" y="290" width="1" height="1"/><rect x="142" y="242" width="1" height="1"/><rect x="452" y="246" width="1" height="1"/><rect x="297" y="274" width="1" height="1"/><rect x="293" y="384" width="1" height="1"/><rect x="301" y="224" width="2" height="1"/><rect x="193" y="217" width="1" height="1"/><rect x="431" y="298" width="1" height="1"/><rect x="189" y="197" width="1" height="1"/><rect x="175" y="307" width="1" height="1"/><rect x="94" y="247" width="1" height="1"/><rect x="206" y="220" width="1" height="1"/><rect x="315" y="193" width="1" height="1"/><rect x="297" y="305" width="1" height="1"/><rect x="212" y="233" width="1" height="1"/><rect x="416" y="281" width="1" height="1"/><rect x="167" y="293" width="1" height="1"/><rect x="72" y="276" width="1" height="1"/><rect x="395" y="328" width="1" height="1"/><rect x="172" y="269" width="1" height="1"/><rect x="304" y="257" width="1" height="1"/><rect x="412" y="266" width="1" height="1"/><rect x="318" y="269" width="1" height="1"/><rect x="296" y="285" width="1" height="1"/><rect x="520" y="261" width="1" height="1"/><rect x="79" y="325" width="1" height="1"/><rect x="89" y="262" width="1" height="1"/><rect x="292" y="261" width="2" height="1"/><rect x="446" y="208" width="1" height="1"/><rect x="264" y="203" width="1" height="1"/><rect x="249" y="279" width="1" height="1"/><rect x="305" y="350" width="1" height="1"/><rect x="190" y="245" width="1" height="1"/><rect x="253" y="298" width="1" height="1"/><rect x="92" y="303" width="1" height="1"/><rect x="222" y="175" width="1" height="1"/><rect x="418" y="235" width="1" height="1"/><rect x="222" y="287" width="1" height="1"/><rect x="264" y="283" width="1" height="1"/><rect x="382" y="237" width="1" height="1"/><rect x="429" y="178" width="1" height="1"/><rect x="109" y="301" width="1" height="1"/><rect x="135" y="276" width="1" height="1"/><rect x="181" y="303" width="1" height="1"/><rect x="240" y="257" width="1" height="1"/><rect x="156" y="332" width="1" height="1"/><rect x="116" y="316" width="1" height="1"/><rect x="244" y="298" width="1" height="1"/><rect x="59" y="232" width="1" height="1"/><rect x="190" y="265" width="1" height="1"/><rect x="76" y="343" width="1" height="1"/><rect x="234" y="348" width="1" height="1"/><rect x="515" y="276" width="1" height="1"/><rect x="86" y="324" width="1" height="1"/><rect x="347" y="284" width="1" height="1"/><rect x="141" y="247" width="1" height="1"/><rect x="273" y="217" width="1" height="1"/><rect x="343" y="250" width="1" height="1"/><rect x="93" y="248" width="1" height="1"/><rect x="129" y="325" width="1" height="1"/><rect x="54" y="240" width="1" height="1"/><rect x="261" y="286" width="1" height="1"/><rect x="81" y="294" width="1" height="1"/><rect x="76" y="184" width="1" height="1"/><rect x="397" y="286" width="1" height="1"/><rect x="315" y="310" width="1" height="1"/><rect x="57" y="246" width="1" height="1"/><rect x="298" y="247" width="1" height="1"/><rect x="371" y="244" width="1" height="1"/><rect x="422" y="261" width="1" height="1"/><rect x="282" y="298" width="1" height="1"/><rect x="100" y="238" width="1" height="1"/><rect x="207" y="228" width="1" height="1"/><rect x="242" y="216" width="1" height="1"/><rect x="78" y="283" width="1" height="1"/><rect x="86" y="194" width="1" height="1"/><rect x="191" y="256" width="1" height="1"/><rect x="57" y="263" width="1" height="1"/><rect x="80" y="271" width="1" height="1"/><rect x="373" y="348" width="1" height="1"/><rect x="284" y="264" width="1" height="1"/><rect x="244" y="280" width="1" height="1"/><rect x="280" y="177" width="1" height="1"/><rect x="129" y="247" width="1" height="1"/><rect x="212" y="285" width="1" height="1"/><rect x="303" y="298" width="1" height="1"/><rect x="124" y="280" width="1" height="1"/><rect x="185" y="327" width="1" height="1"/><rect x="158" y="318" width="1" height="1"/><rect x="381" y="202" width="1" height="1"/><rect x="88" y="310" width="1" height="1"/><rect x="129" y="257" width="2" height="1"/><rect x="164" y="185" width="1" height="1"/><rect x="67" y="277" width="1" height="1"/><rect x="384" y="240" width="1" height="1"/><rect x="272" y="326" width="1" height="1"/><rect x="360" y="231" width="1" height="1"/><rect x="349" y="181" width="1" height="1"/><rect x="228" y="240" width="2" height="1"/><rect x="87" y="261" width="1" height="1"/><rect x="126" y="262" width="1" height="1"/><rect x="261" y="230" width="1" height="1"/><rect x="229" y="278" width="1" height="1"/><rect x="197" y="311" width="1" height="1"/><rect x="284" y="240" width="1" height="1"/><rect x="359" y="261" width="1" height="1"/><rect x="196" y="249" width="1" height="1"/><rect x="407" y="216" width="1" height="1"/><rect x="119" y="330" width="1" height="1"/><rect x="226" y="312" width="1" height="1"/><rect x="102" y="261" width="2" height="1"/><rect x="67" y="259" width="1" height="1"/><rect x="63" y="224" width="1" height="1"/><rect x="289" y="298" width="1" height="1"/><rect x="81" y="266" width="1" height="1"/><rect x="351" y="233" width="1" height="1"/><rect x="101" y="184" width="1" height="1"/><rect x="504" y="217" width="1" height="1"/><rect x="107" y="283" width="1" height="1"/><rect x="340" y="231" width="1" height="1"/><rect x="312" y="246" width="1" height="1"/><rect x="263" y="378" width="1" height="1"/><rect x="337" y="228" width="1" height="1"/><rect x="309" y="374" width="1" height="1"/><rect x="112" y="183" width="1" height="1"/><rect x="108" y="235" width="1" height="1"/><rect x="368" y="193" width="1" height="1"/><rect x="251" y="190" width="1" height="1"/><rect x="156" y="314" width="1" height="1"/><rect x="101" y="291" width="1" height="1"/><rect x="240" y="264" width="1" height="1"/><rect x="272" y="193" width="1" height="1"/><rect x="83" y="256" width="1" height="1"/><rect x="166" y="219" width="1" height="1"/><rect x="243" y="341" width="1" height="1"/><rect x="407" y="292" width="1" height="1"/><rect x="80" y="281" width="1" height="1"/><rect x="228" y="190" width="1" height="1"/><rect x="269" y="226" width="1" height="1"/><rect x="400" y="243" width="1" height="1"/><rect x="220" y="234" width="1" height="1"/><rect x="380" y="372" width="2" height="1"/><rect x="371" y="258" width="1" height="1"/><rect x="63" y="242" width="1" height="1"/><rect x="54" y="257" width="1" height="1"/><rect x="90" y="182" width="1" height="1"/><rect x="462" y="224" width="1" height="1"/><rect x="109" y="303" width="1" height="1"/><rect x="338" y="312" width="1" height="1"/><rect x="326" y="315" width="1" height="1"/><rect x="293" y="330" width="1" height="1"/><rect x="304" y="280" width="1" height="1"/><rect x="105" y="326" width="1" height="1"/><rect x="385" y="281" width="1" height="1"/><rect x="283" y="328" width="1" height="1"/><rect x="127" y="361" width="1" height="1"/><rect x="302" y="267" width="1" height="1"/><rect x="245" y="294" width="1" height="1"/><rect x="250" y="294" width="1" height="1"/><rect x="208" y="304" width="1" height="1"/><rect x="133" y="234" width="1" height="1"/><rect x="206" y="242" width="1" height="1"/><rect x="364" y="239" width="1" height="1"/><rect x="240" y="252" width="1" height="1"/><rect x="187" y="237" width="1" height="1"/><rect x="181" y="286" width="1" height="1"/><rect x="300" y="191" width="1" height="1"/><rect x="129" y="284" width="1" height="1"/><rect x="364" y="316" width="1" height="1"/><rect x="185" y="261" width="1" height="1"/><rect x="329" y="262" width="1" height="1"/><rect x="310" y="244" width="1" height="1"/><rect x="333" y="310" width="1" height="1"/><rect x="53" y="230" width="1" height="1"/><rect x="240" y="309" width="1" height="1"/><rect x="392" y="210" width="1" height="1"/><rect x="91" y="226" width="1" height="1"/><rect x="233" y="312" width="1" height="1"/><rect x="300" y="218" width="1" height="1"/><rect x="121" y="243" width="1" height="1"/><rect x="62" y="302" width="1" height="1"/><rect x="519" y="193" width="1" height="1"/><rect x="64" y="238" width="1" height="1"/><rect x="465" y="242" width="1" height="1"/><rect x="231" y="216" width="1" height="1"/><rect x="175" y="282" width="1" height="1"/><rect x="284" y="332" width="1" height="1"/><rect x="128" y="243" width="1" height="1"/><rect x="222" y="293" width="1" height="1"/><rect x="319" y="217" width="1" height="1"/><rect x="170" y="241" width="1" height="1"/><rect x="99" y="246" width="1" height="1"/><rect x="74" y="364" width="1" height="1"/><rect x="87" y="365" width="1" height="1"/><rect x="86" y="306" width="1" height="1"/><rect x="68" y="184" width="1" height="1"/><rect x="157" y="243" width="1" height="1"/><rect x="227" y="255" width="1" height="1"/><rect x="150" y="245" width="1" height="1"/><rect x="394" y="230" width="1" height="1"/><rect x="423" y="193" width="1" height="1"/><rect x="350" y="284" width="1" height="1"/><rect x="321" y="188" width="2" height="1"/><rect x="398" y="257" width="1" height="1"/><rect x="105" y="291" width="1" height="1"/><rect x="302" y="275" width="1" height="1"/><rect x="64" y="284" width="1" height="1"/><rect x="135" y="242" width="1" height="1"/><rect x="64" y="278" width="1" height="1"/><rect x="84" y="216" width="1" height="1"/><rect x="73" y="329" width="1" height="1"/><rect x="180" y="260" width="1" height="1"/><rect x="265" y="247" width="1" height="1"/><rect x="388" y="251" width="1" height="1"/><rect x="172" y="304" width="1" height="1"/><rect x="197" y="215" width="1" height="1"/><rect x="338" y="280" width="1" height="1"/><rect x="403" y="249" width="1" height="1"/><rect x="288" y="296" width="1" height="1"/><rect x="380" y="208" width="1" height="1"/><rect x="95" y="211" width="1" height="1"/><rect x="460" y="296" width="1" height="1"/><rect x="270" y="178" width="1" height="1"/><rect x="298" y="300" width="1" height="1"/><rect x="383" y="325" width="1" height="1"/><rect x="521" y="250" width="1" height="1"/><rect x="112" y="246" width="2" height="1"/><rect x="466" y="258" width="1" height="1"/><rect x="133" y="365" width="1" height="1"/><rect x="147" y="248" width="1" height="1"/><rect x="81" y="265" width="1" height="1"/><rect x="499" y="278" width="1" height="1"/><rect x="303" y="220" width="2" height="1"/><rect x="134" y="355" width="1" height="1"/><rect x="448" y="270" width="1" height="1"/><rect x="191" y="191" width="1" height="1"/><rect x="534" y="221" width="1" height="1"/><rect x="200" y="253" width="1" height="1"/><rect x="448" y="187" width="1" height="1"/><rect x="301" y="208" width="1" height="1"/><rect x="179" y="329" width="1" height="1"/><rect x="219" y="260" width="1" height="1"/><rect x="379" y="245" width="1" height="1"/><rect x="114" y="268" width="1" height="1"/><rect x="352" y="374" width="1" height="1"/><rect x="145" y="183" width="1" height="1"/><rect x="191" y="255" width="1" height="1"/><rect x="413" y="180" width="1" height="1"/><rect x="333" y="303" width="1" height="1"/><rect x="496" y="288" width="1" height="1"/><rect x="177" y="302" width="1" height="1"/><rect x="261" y="231" width="1" height="1"/><rect x="344" y="178" width="1" height="1"/><rect x="106" y="277" width="1" height="1"/><rect x="378" y="243" width="1" height="1"/><rect x="183" y="191" width="1" height="1"/><rect x="239" y="270" width="1" height="1"/><rect x="371" y="311" width="1" height="1"/><rect x="294" y="299" width="1" height="1"/><rect x="90" y="292" width="1" height="1"/><rect x="284" y="243" width="1" height="1"/><rect x="95" y="362" width="1" height="1"/><rect x="252" y="269" width="1" height="1"/><rect x="366" y="325" width="1" height="1"/><rect x="152" y="278" width="1" height="1"/><rect x="385" y="258" width="1" height="1"/><rect x="348" y="302" width="1" height="1"/><rect x="330" y="211" width="1" height="1"/><rect x="63" y="282" width="1" height="1"/><rect x="219" y="278" width="1" height="1"/><rect x="267" y="177" width="1" height="1"/><rect x="323" y="217" width="1" height="1"/><rect x="232" y="174" width="1" height="1"/><rect x="406" y="242" width="1" height="1"/><rect x="192" y="280" width="2" height="1"/><rect x="243" y="254" width="1" height="1"/><rect x="179" y="179" width="1" height="1"/><rect x="65" y="277" width="1" height="1"/><rect x="350" y="327" width="1" height="1"/><rect x="412" y="242" width="1" height="1"/><rect x="411" y="287" width="1" height="1"/><rect x="166" y="255" width="1" height="1"/><rect x="141" y="316" width="1" height="1"/><rect x="162" y="243" width="1" height="1"/><rect x="82" y="221" width="1" height="1"/><rect x="433" y="340" width="1" height="1"/><rect x="64" y="196" width="1" height="1"/><rect x="303" y="310" width="1" height="1"/><rect x="265" y="237" width="1" height="1"/><rect x="74" y="256" width="1" height="1"/><rect x="339" y="215" width="1" height="1"/><rect x="201" y="197" width="1" height="1"/><rect x="355" y="235" width="1" height="1"/><rect x="149" y="334" width="1" height="1"/><rect x="308" y="329" width="1" height="1"/><rect x="291" y="243" width="1" height="1"/><rect x="203" y="176" width="1" height="1"/><rect x="198" y="286" width="1" height="1"/><rect x="406" y="311" width="1" height="1"/><rect x="335" y="298" width="1" height="1"/><rect x="108" y="375" width="1" height="1"/><rect x="336" y="339" width="1" height="1"/><rect x="90" y="183" width="1" height="1"/><rect x="108" y="368" width="1" height="1"/><rect x="331" y="237" width="1" height="1"/><rect x="397" y="340" width="1" height="1"/><rect x="366" y="299" width="1" height="1"/><rect x="361" y="257" width="1" height="1"/><rect x="146" y="320" width="1" height="1"/><rect x="81" y="232" width="1" height="1"/><rect x="376" y="275" width="1" height="1"/><rect x="146" y="174" width="1" height="1"/><rect x="74" y="299" width="1" height="1"/><rect x="264" y="356" width="1" height="1"/><rect x="397" y="303" width="1" height="1"/><rect x="304" y="290" width="1" height="1"/><rect x="323" y="197" width="1" height="1"/><rect x="242" y="290" width="1" height="1"/><rect x="363" y="278" width="1" height="1"/><rect x="174" y="220" width="1" height="1"/><rect x="118" y="270" width="1" height="1"/><rect x="238" y="178" width="1" height="1"/><rect x="135" y="321" width="1" height="1"/><rect x="247" y="232" width="1" height="1"/><rect x="463" y="192" width="1" height="1"/><rect x="282" y="296" width="1" height="1"/><rect x="88" y="263" width="1" height="1"/><rect x="245" y="264" width="2" height="1"/><rect x="209" y="239" width="1" height="1"/><rect x="119" y="329" width="1" height="1"/><rect x="107" y="192" width="1" height="1"/><rect x="177" y="304" width="1" height="1"/><rect x="381" y="258" width="1" height="1"/><rect x="109" y="200" width="1" height="1"/><rect x="237" y="288" width="1" height="1"/><rect x="125" y="226" width="1" height="1"/><rect x="274" y="256" width="1" height="1"/><rect x="251" y="218" width="1" height="1"/><rect x="239" y="284" width="1" height="1"/><rect x="153" y="215" width="1" height="1"/><rect x="404" y="250" width="1" height="1"/><rect x="85" y="336" width="1" height="1"/><rect x="189" y="255" width="1" height="1"/><rect x="155" y="302" width="2" height="1"/><rect x="81" y="314" width="1" height="1"/><rect x="182" y="329" width="1" height="1"/><rect x="81" y="188" width="1" height="1"/><rect x="352" y="208" width="1" height="1"/><rect x="99" y="328" width="1" height="1"/><rect x="242" y="269" width="1" height="1"/><rect x="350" y="208" width="1" height="1"/><rect x="198" y="269" width="1" height="1"/><rect x="57" y="336" width="1" height="1"/><rect x="312" y="283" width="1" height="1"/><rect x="362" y="192" width="1" height="1"/><rect x="363" y="331" width="1" height="1"/><rect x="402" y="276" width="1" height="1"/><rect x="75" y="301" width="1" height="1"/><rect x="279" y="292" width="1" height="1"/><rect x="127" y="262" width="1" height="1"/><rect x="57" y="233" width="1" height="1"/><rect x="121" y="310" width="1" height="1"/><rect x="131" y="292" width="1" height="1"/><rect x="223" y="224" width="1" height="1"/><rect x="222" y="319" width="1" height="1"/><rect x="292" y="268" width="1" height="1"/><rect x="286" y="268" width="1" height="1"/><rect x="123" y="284" width="1" height="1"/><rect x="179" y="236" width="1" height="1"/><rect x="186" y="268" width="1" height="1"/><rect x="289" y="244" width="1" height="1"/><rect x="238" y="188" width="1" height="1"/><rect x="362" y="206" width="1" height="1"/><rect x="273" y="262" width="1" height="1"/><rect x="383" y="286" width="1" height="1"/><rect x="130" y="297" width="2" height="1"/><rect x="248" y="185" width="1" height="1"/><rect x="206" y="304" width="1" height="1"/><rect x="378" y="283" width="1" height="1"/><rect x="100" y="275" width="1" height="1"/><rect x="208" y="214" width="1" height="1"/><rect x="150" y="225" width="1" height="1"/><rect x="360" y="274" width="1" height="1"/><rect x="215" y="271" width="1" height="1"/><rect x="120" y="313" width="1" height="1"/><rect x="142" y="179" width="1" height="1"/><rect x="367" y="377" width="1" height="1"/><rect x="70" y="300" width="1" height="1"/><rect x="317" y="280" width="1" height="1"/><rect x="99" y="235" width="1" height="1"/><rect x="276" y="288" width="1" height="1"/><rect x="105" y="306" width="1" height="1"/><rect x="245" y="310" width="1" height="1"/><rect x="145" y="241" width="1" height="1"/><rect x="73" y="228" width="1" height="1"/><rect x="357" y="289" width="1" height="1"/><rect x="161" y="235" width="1" height="1"/><rect x="143" y="337" width="1" height="1"/><rect x="158" y="269" width="1" height="1"/><rect x="512" y="182" width="1" height="1"/><rect x="98" y="283" width="1" height="1"/><rect x="65" y="273" width="1" height="1"/><rect x="416" y="156" width="1" height="1"/><rect x="342" y="168" width="1" height="1"/><rect x="126" y="150" width="1" height="1"/><rect x="75" y="162" width="1" height="1"/><rect x="250" y="164" width="1" height="1"/><rect x="235" y="147" width="1" height="1"/><rect x="333" y="148" width="1" height="1"/><rect x="510" y="159" width="1" height="1"/><rect x="394" y="153" width="1" height="1"/><rect x="480" y="157" width="1" height="1"/><rect x="67" y="148" width="1" height="1"/><rect x="214" y="153" width="1" height="1"/><rect x="240" y="149" width="1" height="1"/><rect x="211" y="150" width="1" height="1"/><rect x="82" y="164" width="1" height="1"/><rect x="403" y="165" width="1" height="1"/><rect x="247" y="156" width="1" height="1"/><rect x="142" y="151" width="1" height="1"/><rect x="105" y="156" width="1" height="1"/><rect x="59" y="160" width="1" height="1"/><rect x="443" y="153" width="1" height="1"/><rect x="147" y="169" width="1" height="1"/><rect x="470" y="148" width="1" height="1"/><rect x="154" y="152" width="1" height="1"/><rect x="245" y="156" width="1" height="1"/><rect x="292" y="148" width="1" height="1"/><rect x="429" y="155" width="1" height="1"/><rect x="74" y="160" width="1" height="1"/><rect x="302" y="157" width="1" height="1"/><rect x="97" y="161" width="1" height="1"/></g>
</g>
<polyline fill="none" stroke="#ff8208" stroke-width="1" stroke-linejoin="bevel" shape-rendering="crispEdges" points="51.5,358.4 53.5,337.3 55.5,355.9 58.0,364.6 60.4,377.1 63.4,329.8 64.9,350.9 67.4,339.8 67.9,324.0 69.2,287.5 70.4,272.0 70.9,287.5 71.6,306.0 72.2,318.5 73.0,334.0 73.4,332.3 75.9,342.2 77.4,358.4 79.8,341.0 81.6,350.9 84.8,322.3 86.6,338.5 87.8,323.0 89.1,286.5 90.3,271.0 90.8,286.5 91.5,305.0 92.1,317.5 92.9,333.0 94.3,347.2 95.8,364.6 97.8,370.8 99.5,362.1 101.5,370.8 104.7,380.8 106.9,324.0 108.2,287.5 109.4,272.0 109.9,287.5 110.6,306.0 111.2,318.5 112.0,334.0 112.2,322.3 113.9,384.5 114.7,410.6 116.4,350.9 118.9,357.2 121.9,350.9 123.9,329.8 126.6,388.3 128.1,314.9 129.3,288.0 130.3,309.9 131.3,343.5 133.8,306.9 135.6,343.5 138.0,384.5 140.5,352.2 142.0,344.7 143.5,350.9 145.7,326.0 147.0,289.5 148.2,274.0 148.7,289.5 149.4,308.0 150.0,320.5 150.8,336.0 152.5,369.6 154.2,394.5 157.5,362.1 159.4,355.9 162.4,359.7 163.7,364.6 165.4,382.0 167.4,309.9 168.6,289.5 169.6,307.4 170.0,327.3 172.0,338.5 173.5,331.0 175.5,347.2 178.0,338.5 180.4,331.0 182.4,336.0 184.4,349.7 184.9,331.0 186.2,294.5 187.4,279.0 187.9,294.5 188.6,313.0 189.2,325.5 190.0,341.0 190.4,392.0 191.9,338.5 193.6,341.0 194.9,343.5 196.1,372.1 197.4,394.5 198.9,338.5 200.3,343.5 201.6,352.2 203.1,348.5 204.8,309.9 205.6,262.0 206.2,240.0 207.3,213.7 208.2,238.0 209.0,265.0 209.3,312.4 209.8,324.8 212.3,348.5 213.8,336.0 215.3,339.8 217.8,353.4 221.0,349.7 222.7,339.8 224.7,312.4 225.3,280.0 225.9,262.0 226.7,249.0 227.6,266.0 228.4,282.0 228.7,314.9 229.2,332.3 231.2,350.9 233.4,348.5 235.9,337.3 238.4,334.3 240.4,337.3 242.1,350.9 243.4,359.7 243.9,340.0 245.2,303.5 246.4,288.0 246.9,303.5 247.6,322.0 248.2,334.5 249.0,350.0 249.1,354.7 251.6,383.3 254.1,352.2 256.6,338.5 258.6,332.3 260.8,343.5 263.3,334.0 264.6,297.5 265.8,282.0 266.3,297.5 267.0,316.0 267.6,328.5 268.4,344.0 269.0,337.3 271.5,353.4 273.5,369.6 277.0,342.2 280.0,336.0 283.2,317.0 284.5,280.5 285.7,265.0 286.2,280.5 286.9,299.0 287.5,311.5 288.3,327.0 288.9,332.3 290.6,364.6 292.0,392.0 294.0,384.5 295.5,372.1 297.5,404.4 299.5,362.1 301.0,352.2 301.9,328.6 303.2,292.1 304.4,276.6 304.9,292.1 305.6,310.6 306.2,323.1 307.0,338.6 307.4,337.3 309.4,375.8 311.4,354.7 312.9,347.2 314.4,352.2 315.9,372.1 317.6,390.7 319.4,346.0 320.9,360.9 321.8,331.0 323.1,294.5 324.3,279.0 324.8,294.5 325.5,313.0 326.1,325.5 326.9,341.0 329.3,339.8 331.8,346.0 334.8,358.4 338.0,375.8 341.8,390.7 343.2,339.8 343.4,305.0 344.2,290.8 345.1,306.0 346.2,312.4 346.7,357.2 349.2,397.0 351.7,406.9 354.2,372.1 356.7,339.8 358.7,346.0 360.4,372.1 361.7,382.0 362.9,312.4 362.9,300.0 363.6,289.5 364.5,302.0 365.6,312.4 366.6,374.6 368.1,348.5 370.4,357.2 372.8,359.7 375.3,379.6 378.6,409.4 381.0,332.8 382.3,296.3 383.5,280.8 384.0,296.3 384.7,314.8 385.3,327.3 386.1,342.8 387.8,357.2 389.5,365.9 391.5,367.1 393.0,374.6 395.0,359.7 397.7,350.9 400.5,369.6 402.7,322.3 404.4,352.2 405.9,364.6 408.4,359.7 410.4,354.7 412.4,372.1 414.0,384.5 416.5,374.6 418.5,370.8 419.7,339.0 421.0,302.5 422.2,287.0 422.7,302.5 423.4,321.0 424.0,333.5 424.8,349.0 426.4,389.5 427.9,400.7 429.4,397.0 430.9,364.6 432.7,355.9 434.4,353.4 435.9,369.6 436.9,379.6 438.4,369.6 439.9,324.8 441.4,307.4 442.6,317.4 444.3,359.7 446.3,349.7 448.8,359.7 451.3,357.2 452.8,372.1 455.0,392.0 456.8,401.9 458.3,369.6 460.0,339.8 461.3,327.3 462.8,339.8 464.2,357.2 466.2,364.6 467.7,389.5 468.7,401.9 470.7,362.1 473.2,354.7 474.2,364.6 475.7,393.2 477.7,364.6 479.2,314.9 480.7,299.5 481.7,314.9 482.7,349.7 484.6,382.0 487.4,383.3 489.1,387.0 490.6,379.6 492.1,394.5 493.6,406.9 496.1,390.7 498.1,347.2 499.6,318.6 500.6,303.7 501.6,322.3 503.1,359.7 504.0,380.8 505.5,372.1 507.5,392.0 509.5,390.7 511.5,372.1 513.0,367.1 515.0,374.6 516.0,372.1 517.5,395.7 518.5,339.8 519.7,307.4 521.0,322.3 522.0,372.1 523.5,385.8 527.2,382.0 529.4,398.2 531.4,384.5 533.4,387.0 535.4,382.0 536.6,377.1 537.9,374.6"/>
<g font-family="Liberation Sans, sans-serif" font-size="10.8px" fill="#000"><text x="46" y="176.1" text-anchor="end">7.0</text>
<text x="542" y="176.1">35</text>
<text x="46" y="220.1" text-anchor="end">6.0</text>
<text x="542" y="220.1">30</text>
<text x="46" y="264.1" text-anchor="end">5.0</text>
<text x="542" y="264.1">25</text>
<text x="46" y="308.1" text-anchor="end">4.0</text>
<text x="542" y="308.1">20</text>
<text x="46" y="352.1" text-anchor="end">3.0</text>
<text x="542" y="352.1">15</text>
<text x="46" y="396.1" text-anchor="end">2.0</text>
<text x="542" y="396.1">10</text>
<text x="46" y="440.1" text-anchor="end">1.0</text>
<text x="542" y="440.1">5</text>
<text x="50.7" y="496" text-anchor="middle">0</text>
<text x="99.3" y="496" text-anchor="middle">6590</text>
<text x="147.9" y="496" text-anchor="middle">13181</text>
<text x="196.5" y="496" text-anchor="middle">19771</text>
<text x="245.1" y="496" text-anchor="middle">26362</text>
<text x="293.7" y="496" text-anchor="middle">32953</text>
<text x="342.3" y="496" text-anchor="middle">39543</text>
<text x="390.9" y="496" text-anchor="middle">46134</text>
<text x="439.5" y="496" text-anchor="middle">52724</text>
<text x="488.1" y="496" text-anchor="middle">59315</text>
<text x="536.7" y="496" text-anchor="middle">65906gB</text>
<text x="51" y="169">MB/s</text>
<text x="537" y="169" text-anchor="end">ms</text></g>
</svg>
</body></html>
